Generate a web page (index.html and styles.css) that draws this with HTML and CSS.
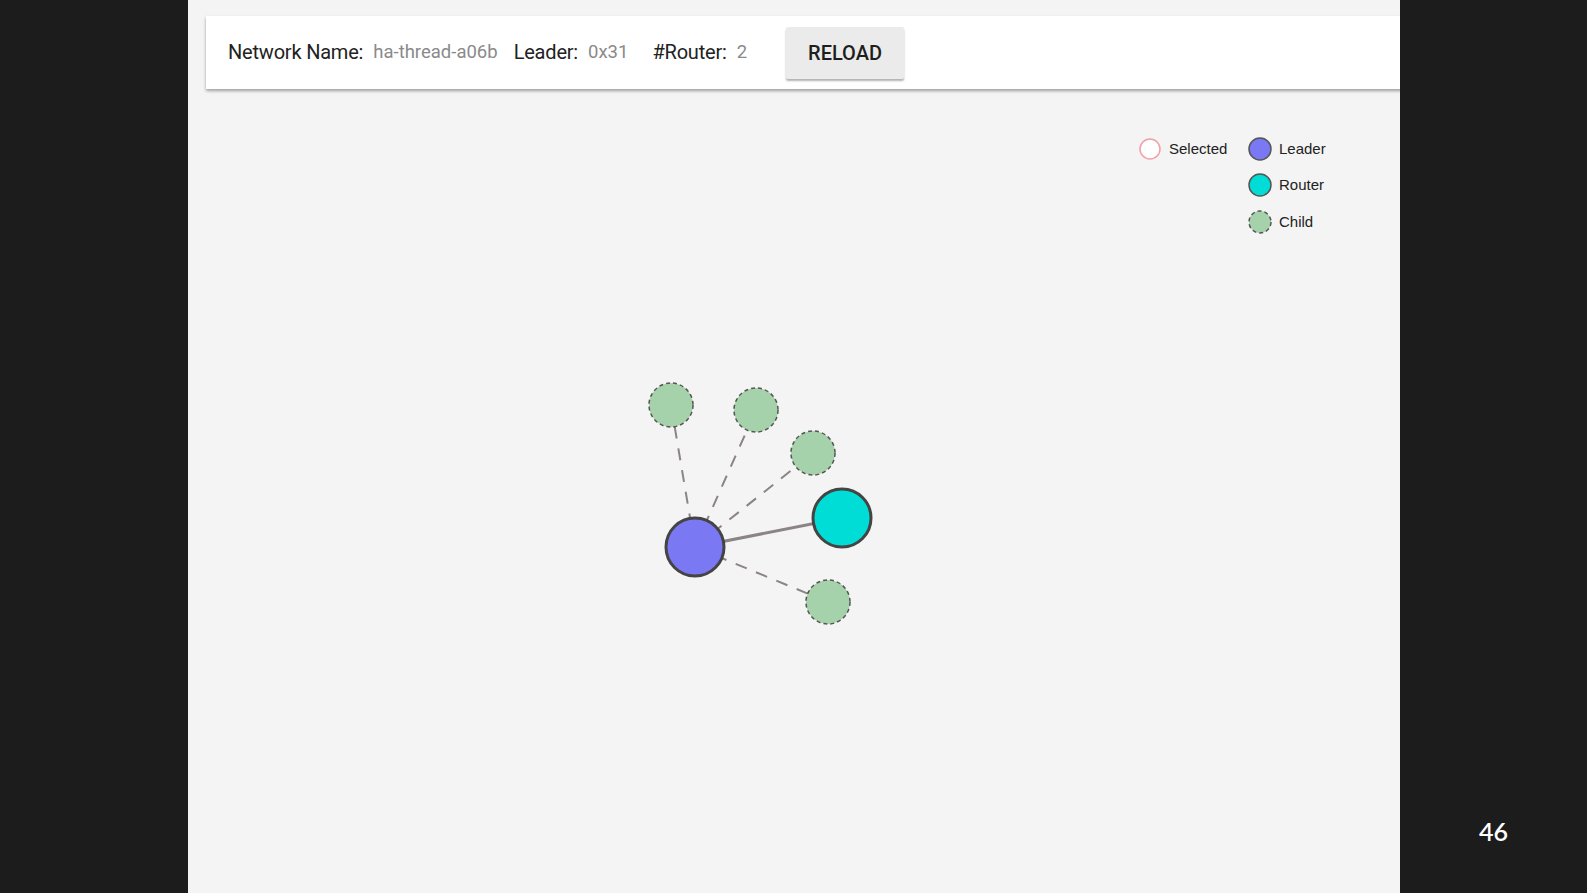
FILE: index.html
```html
<!DOCTYPE html>
<html lang="en">
<head>
    <meta charset="UTF-8">
    <meta name="viewport" content="width=device-width, initial-scale=1.0">
    <title>Thread Topology</title>
    <link rel="stylesheet" href="styles.css">
</head>
<body>
    <div class="slide">
        <div class="side"></div>
        <div class="panel">
            <!-- Barra de status da rede -->
            <div class="card">
                <span class="label">Network Name:</span>
                <span class="value v-name">ha-thread-a06b</span>
                <span class="label">Leader:</span>
                <span class="value v-leader">0x31</span>
                <span class="label">#Router:</span>
                <span class="value v-router">2</span>
                <button type="button">RELOAD</button>
            </div>

            <!-- Grafo da topologia -->
            <svg class="graph" width="1212" height="804" viewBox="0 0 1212 804">
                <g class="links">
                    <line class="link child-link" x1="507" y1="458" x2="483" y2="316"/>
                    <line class="link child-link" x1="507" y1="458" x2="568" y2="321"/>
                    <line class="link child-link" x1="507" y1="458" x2="625" y2="364"/>
                    <line class="link child-link" x1="507" y1="458" x2="640" y2="513"/>
                    <line class="link router-link" x1="507" y1="458" x2="654" y2="429"/>
                </g>
                <g class="nodes">
                    <circle class="child" cx="483" cy="316" r="22"/>
                    <circle class="child" cx="568" cy="321" r="22"/>
                    <circle class="child" cx="625" cy="364" r="22"/>
                    <circle class="child" cx="640" cy="513" r="22"/>
                    <circle class="leader" cx="507" cy="458" r="29"/>
                    <circle class="router" cx="654" cy="429" r="29"/>
                </g>
                <g class="legend">
                    <circle class="selected" cx="962" cy="60" r="10"/>
                    <text x="981" y="65">Selected</text>
                    <circle class="leader small" cx="1072" cy="60" r="11"/>
                    <text x="1091" y="65">Leader</text>
                    <circle class="router small" cx="1072" cy="96" r="11"/>
                    <text x="1091" y="101">Router</text>
                    <circle class="child small" cx="1072" cy="133" r="11"/>
                    <text x="1091" y="138">Child</text>
                </g>
            </svg>
        </div>
        <div class="side right">
            <span class="page">46</span>
        </div>
    </div>
</body>
</html>
```

FILE: styles.css
```css
body {
    margin: 0;
    background-color: #1c1c1c;
    font-family: Roboto, "Liberation Sans", sans-serif;
    overflow: hidden;
}
.slide {
    display: flex;
    height: 893px;
}
.side {
    width: 188px;
    flex-shrink: 0;
}
.side.right {
    width: 187px;
    display: flex;
    justify-content: center;
    align-items: flex-end;
    padding-bottom: 47px;
    box-sizing: border-box;
}
.page {
    color: #fff;
    font-family: Lato, "Open Sans", sans-serif;
    font-weight: 600;
    font-size: 25px;
}
.panel {
    width: 1212px;
    flex-shrink: 0;
    background-color: #f4f4f4;
    display: flex;
    flex-direction: column;
    overflow: hidden;
}

/* Barra superior */
.card {
    margin: 16px -20px 0 18px;
    height: 73px;
    background-color: #fff;
    box-shadow: 0 2px 3px rgba(0, 0, 0, 0.35);
    display: flex;
    align-items: center;
    padding-left: 22px;
    padding-bottom: 2px;
    box-sizing: border-box;
}
.label {
    font-size: 20px;
    color: #222;
    letter-spacing: -0.2px;
}
.value {
    font-size: 18.5px;
    color: #8a8a8a;
    margin-left: 10px;
}
.v-name {
    margin-right: 16px;
}
.v-leader {
    margin-right: 24px;
}
.v-router {
    margin-right: 39px;
}
button {
    height: 52px;
    width: 118px;
    margin-top: 2px;
    background-color: #ebebeb;
    border: none;
    border-radius: 2px;
    box-shadow: 0 2px 2px rgba(0, 0, 0, 0.3);
    font-family: Roboto, "Liberation Sans", sans-serif;
    font-weight: 500;
    font-size: 20px;
    color: #1e1e1e;
    cursor: pointer;
}

/* Grafo */
.graph {
    display: block;
    flex-shrink: 0;
}
.link {
    stroke: #8c8484;
}
.child-link {
    stroke-width: 2;
    stroke-dasharray: 12 10;
}
.router-link {
    stroke-width: 3;
}
.leader {
    fill: #7b78f4;
    stroke: #444;
    stroke-width: 3;
}
.router {
    fill: #00ddd6;
    stroke: #444;
    stroke-width: 3;
}
.child {
    fill: #a6d2ab;
    stroke: #555;
    stroke-width: 1.5;
    stroke-dasharray: 4 3;
}
.small {
    stroke-width: 1.5;
}
.leader.small, .router.small {
    stroke: #555;
}
.selected {
    fill: #fff;
    stroke: #f0a0a8;
    stroke-width: 1.5;
}
.legend text {
    font-family: "Liberation Sans", Arial, sans-serif;
    font-size: 15px;
    fill: #222;
}
```
